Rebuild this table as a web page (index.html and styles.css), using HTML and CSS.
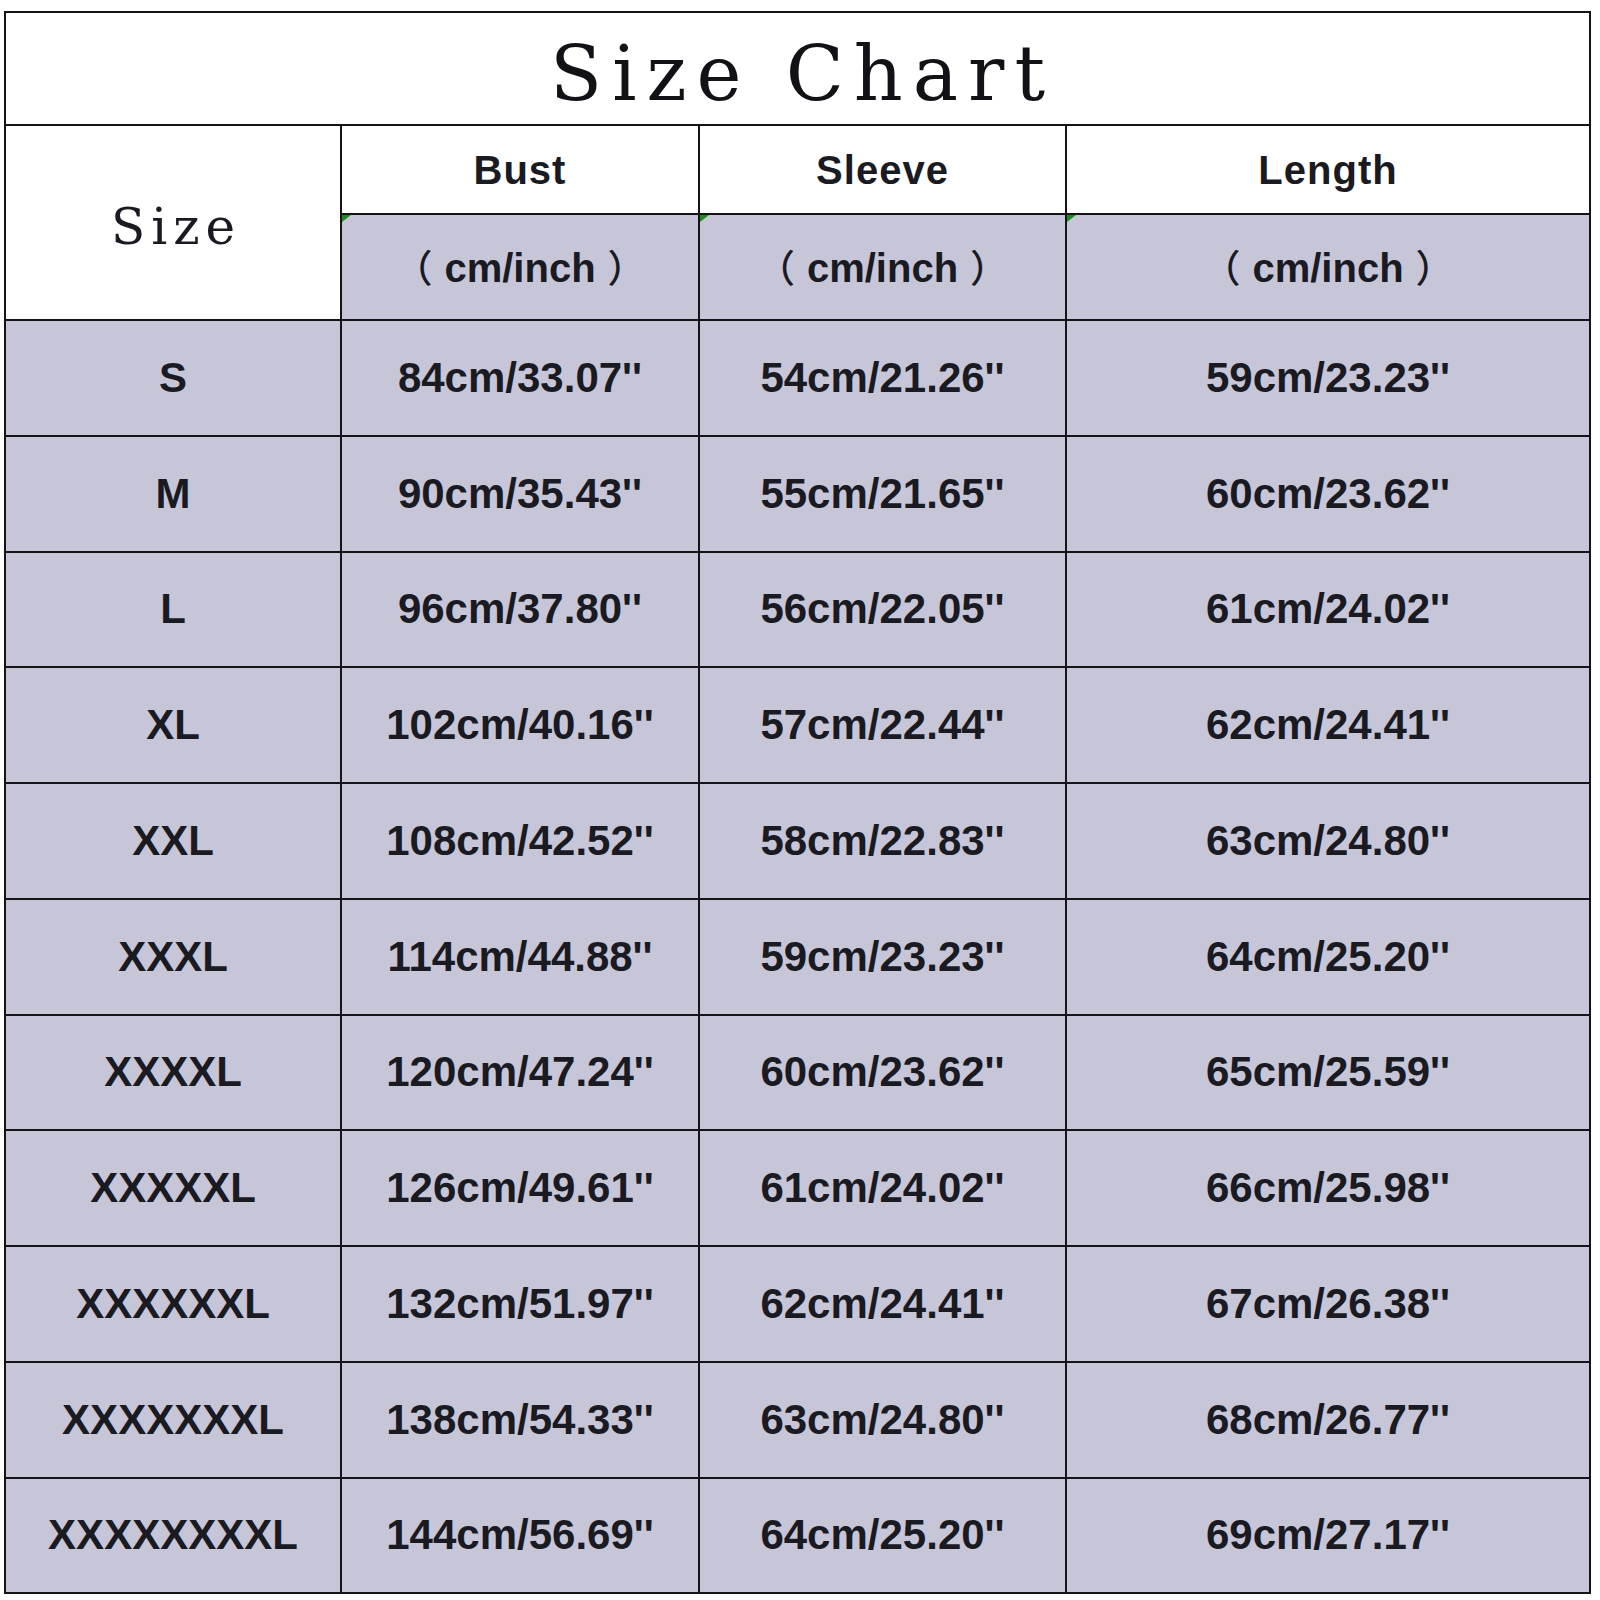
FILE: index.html
```html
<!DOCTYPE html>
<html>
<head>
<meta charset="utf-8">
<link rel="stylesheet" href="styles.css">
</head>
<body>
<table class="chart">
  <colgroup>
    <col class="c-size">
    <col class="c-bust">
    <col class="c-sleeve">
    <col class="c-length">
  </colgroup>
  <tr class="r-title"><td colspan="4" class="title">Size Chart</td></tr>
  <tr class="r-head">
    <td rowspan="2" class="size-head">Size</td>
    <td class="head">Bust</td>
    <td class="head">Sleeve</td>
    <td class="head">Length</td>
  </tr>
  <tr class="r-unit">
    <td class="unit"><span class="mark"></span><span class="paren-l">（</span>cm/inch<span class="paren-r">）</span></td>
    <td class="unit"><span class="mark"></span><span class="paren-l">（</span>cm/inch<span class="paren-r">）</span></td>
    <td class="unit"><span class="mark"></span><span class="paren-l">（</span>cm/inch<span class="paren-r">）</span></td>
  </tr>
  <tr class="row"><td>S</td><td>84cm/33.07''</td><td>54cm/21.26''</td><td>59cm/23.23''</td></tr>
  <tr class="row"><td>M</td><td>90cm/35.43''</td><td>55cm/21.65''</td><td>60cm/23.62''</td></tr>
  <tr class="row"><td>L</td><td>96cm/37.80''</td><td>56cm/22.05''</td><td>61cm/24.02''</td></tr>
  <tr class="row"><td>XL</td><td>102cm/40.16''</td><td>57cm/22.44''</td><td>62cm/24.41''</td></tr>
  <tr class="row"><td>XXL</td><td>108cm/42.52''</td><td>58cm/22.83''</td><td>63cm/24.80''</td></tr>
  <tr class="row"><td>XXXL</td><td>114cm/44.88''</td><td>59cm/23.23''</td><td>64cm/25.20''</td></tr>
  <tr class="row"><td>XXXXL</td><td>120cm/47.24''</td><td>60cm/23.62''</td><td>65cm/25.59''</td></tr>
  <tr class="row"><td>XXXXXL</td><td>126cm/49.61''</td><td>61cm/24.02''</td><td>66cm/25.98''</td></tr>
  <tr class="row"><td>XXXXXXL</td><td>132cm/51.97''</td><td>62cm/24.41''</td><td>67cm/26.38''</td></tr>
  <tr class="row"><td>XXXXXXXL</td><td>138cm/54.33''</td><td>63cm/24.80''</td><td>68cm/26.77''</td></tr>
  <tr class="row"><td>XXXXXXXXL</td><td>144cm/56.69''</td><td>64cm/25.20''</td><td>69cm/27.17''</td></tr>
</table>
</body>
</html>
```

FILE: styles.css
```css
html, body {
  margin: 0;
  padding: 0;
  background: #ffffff;
}

body {
  padding: 11px 0 0 4px;
}

.chart {
  border-collapse: collapse;
  table-layout: fixed;
  width: 1587px;
  font-family: "Liberation Sans", Arial, "Noto Sans CJK SC", sans-serif;
  font-weight: bold;
  color: #1a1a22;
}

.c-size { width: 336px; }
.c-bust { width: 358px; }
.c-sleeve { width: 367px; }
.c-length { width: 524px; }

.chart td {
  border: 2px solid #141418;
  text-align: center;
  vertical-align: middle;
  padding: 0;
  background: #c7c6d9;
  font-size: 42px;
  line-height: 1;
}

.r-head td { height: 87px; }
.r-unit td { height: 104px; }
.row td { height: 113.75px; }

.chart td.title {
  background: #ffffff;
  font-family: "DejaVu Serif", "Liberation Serif", serif;
  font-weight: normal;
  font-size: 76px;
  letter-spacing: 10px;
  text-indent: 10px;
  color: #111116;
  padding-top: 10px;
  height: 101px;
}

.chart td.size-head {
  background: #ffffff;
  font-family: "DejaVu Serif", "Liberation Serif", serif;
  font-weight: normal;
  font-size: 50px;
  letter-spacing: 6px;
  text-indent: 6px;
  padding-top: 8px;
}

.chart td.head {
  background: #ffffff;
  font-size: 40px;
  letter-spacing: 1px;
}

.chart td.unit {
  position: relative;
  font-size: 40px;
}

.paren-l,
.paren-r {
  font-family: "Noto Sans CJK SC", sans-serif;
  font-weight: 500;
  font-size: 38px;
}

.paren-l { margin-right: 12px; }
.paren-r { margin-left: 12px; }

.mark {
  position: absolute;
  left: 0;
  top: 0;
  width: 0;
  height: 0;
  border-top: 7px solid #1f8a1f;
  border-right: 9px solid transparent;
}
```
